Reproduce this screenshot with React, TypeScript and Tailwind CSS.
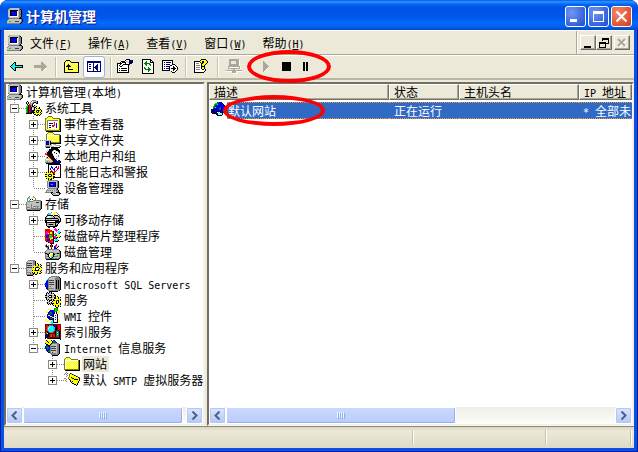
import type { ReactNode } from "react";

const palette: Record<string, string> = {
  K: "#000000", W: "#ffffff", G: "#808080", L: "#c0c0c0", D: "#404040",
  B: "#0000ff", N: "#000080", Y: "#ffff00", y: "#ffff9c", O: "#808000",
  R: "#ff0000", r: "#800000", g: "#008000", l: "#00e000", C: "#00ffff",
  t: "#008080", M: "#ff00ff", m: "#800080", S: "#aca899", s: "#6699ff"
};

const icons: Record<string, string[]> = {
  computer: [
    "..GLLLLLLLLLG...",
    ".GLLLLLLLLLLGK..",
    ".LLKKKKKKKKLGGK.",
    ".LLKNNNNNNWLGGK.",
    ".LLKNBBBBNWLGGK.",
    ".LLKNBBBBNWLGGK.",
    ".LLKNBBBBNWLGGK.",
    ".LLKNNNNNNWLGGK.",
    ".LLWWWWWWWWLGGK.",
    ".GLLLLLLLLLLGK..",
    "..GGGGGGGGGGKKK.",
    ".GLLLLLLLLLLLLGK",
    "GLLLLLLLLLLLLLGK",
    "LLllLLLLDDDDLLGK",
    "LLLLLLLLLLLLLGK.",
    "GGGGGGGGGGGGGK.."
  ],
  tools: [
    "......GGGG......",
    ".K...GWLLLGK....",
    "KWK.GWLGKKLK....",
    "KLK.GLGK..KK....",
    ".K.RGLK.........",
    ".lKRRGK.KL......",
    "llKRrGKKLLK.....",
    "lgKRrKLLKK.Y.K..",
    "lgKRrKWLK.KYOK..",
    "lgKRrBWLKYYYYYK.",
    "lgKRrBNKKYOKKOYK",
    "lgKRrBNKYYK.KYYK",
    "lgKRrKNKKYOKOYK.",
    "KKKKKK.KYYYYYYYK",
    "........KKYOKYK.",
    "..........KK.K.."
  ],
  events: [
    "...OOOO.........",
    "..OYyYyO........",
    "OOyYyYyYOOOOOOO.",
    "OYyYyYyYyYyYyYOK",
    "OyGGGGGGGGGGGyOK",
    "OYGWWWWWWWWWWYOK",
    "OyGWWWWWWRWWWyOK",
    "OYGWNNNNWRWBWYOK",
    "OyGWWWWWWRWBWyOK",
    "OYGWNNWRRRWBWYOK",
    "OyGWWWWRRWWBWyOK",
    "OYGWNNWWWWWBWYOK",
    "OyGWWWWWWWWWWyOK",
    "OYyYyYyYyYyYyYOK",
    "OOOOOOOOOOOOOOOK",
    ".KKKKKKKKKKKKKKK"
  ],
  share: [
    "...OOOOO........",
    "..OYyYyYO.......",
    ".OyYyYyYyOOOOOO.",
    ".OWWWWWWWWWWWWOK",
    ".OWYyYyYyYyYyYOK",
    ".OWyYyYyYyYyYyOK",
    ".OWYyYyYyYyYyYOK",
    ".OWyYyYyYyYyYyOK",
    "LLLLLLYyYyYyYyOK",
    "LNNNLKyYyYyYyYOK",
    "LNBBLKOOOOOOOOOK",
    "LNBBLKKKKKKKKKKK",
    "LNNNLKLWLSS.....",
    "LLLLLLLWWWLSSSS.",
    "GGGGGLLLLWWWWWLK",
    ".KKKK.KKKKKKKKK."
  ],
  users: [
    "......KKKKKKK...",
    "....KKKKKKKKKK..",
    "..LLKKKKLWLKKKK.",
    ".LWKKKKLWWWWLKK.",
    ".LNKKKKWWKWWWLK.",
    "RLNKKKKLWWWKWWG.",
    "MRKNKKKKWWWWWW..",
    ".YRKKKKKLWWWWG..",
    "..YRKKKKKWWLWG..",
    ".LKYRKKKKLWWW...",
    ".LLLYRKKKKWG....",
    "LWWWLYRKKNNLW...",
    "LLLLLLYRKNNNWBK.",
    "LLlLLLLYKNNNNNNK",
    "GGGGGGGKNNNNNNNK",
    ".KKKKKKKKKKKKKK."
  ],
  perf: [
    "...KKKKKKKKKKKKK",
    "...KWWWWWWWWWWWK",
    "...KWWBWWWWBWRWK",
    "...KWWBBWWBBWRWK",
    "...KWBWBWBWWRRWK",
    "...KWBWWBBWWRWWK",
    "...KWWRWWBWRWWWK",
    "...KYRKRWRRWWWWK",
    ".KYKYKYKRRWWWWWK",
    ".YYYYYYYKRWWWWWK",
    "KKYOKKOYKKWWWWWK",
    "YYYKWWKYYYWWWWWK",
    "KKYOKKOYKKWWWWWK",
    ".YYYYYYYKKKKKKKK",
    ".KYKYYKYK.......",
    "...KYKK........."
  ],
  device: [
    "...GGGGGGGGGG...",
    "..GLLLLLLLLLGK..",
    "..GLNNNNNNNLGK..",
    "..GLNBBBBBNLGK..",
    "..GLNBssBBNLGK..",
    "..GLNBBBBBNLGK..",
    "..GLNNNNNNNLGK..",
    "..GLLLLLLLLLGK..",
    "...GGGGGGGGGK...",
    "..GLLLLLLLLGK...",
    ".GLGLGLGLGLGGK..",
    ".GLLLLLLLLLLGK..",
    "GGGGGGKKLLLKKKK.",
    "......KLGGLWLLKK",
    ".......KLLLLLLK.",
    "........KKKKKK.."
  ],
  storage: [
    "...GWWyG........",
    "..GCWyYLG.......",
    ".GCCWYYWWG......",
    ".GWWK.KWWG......",
    ".GWlWWWGGGGGGGG.",
    ".GGGGGGLLLLLLLGK",
    "GLLLLLLLLLDDDLGK",
    "GLLLLLLLLLLLLLGK",
    "GLLLLGLLLLLLLLGK",
    "GLLLLGLLLLLLLLGK",
    "GLLLLGLGGGGGGLGK",
    "GGGGLGLLLLLlLLGK",
    "GLLLLGGGGGGGGGGK",
    "GGGGGGGGGGGGGGK.",
    ".KKKKKKKKKKKKK.."
  ],
  removable: [
    "......GWWYYG....",
    "...GCCWWYYYWG...",
    "..GCCCWWYYWWWG..",
    "..KKKKKKWKKKKWG.",
    ".KLWWWLLKLLLLKG.",
    "KLWWWLLLLKLLLLK.",
    "KKKKKKKKKKKKKLLK",
    "KLLLLLLLLLLLLKLK",
    "KKKKKKKKKKKKKKLK",
    "KKWWWWWWWWKKKKKK",
    "KKKKKKKKKKKKKKK.",
    ".KLLLLLLLLKLLK..",
    ".KLGKKKKGLKLK...",
    ".KLLLLLLLLKKK...",
    "..KKKKKKKKKK....",
    "...KK...KK......"
  ],
  defrag: [
    "..........M.....",
    "RRRRR....MMM.K..",
    "RrrRRRR...MMM...",
    "RRRRRRRRK..M.CC.",
    "RMMRRYYRK...CCCK",
    "RMMYRYYRK.l..CK.",
    "RRRRRRRRKlll....",
    "RBBBlllRK.lK.YY.",
    "RBBBlllRKMM.YYYK",
    "RBBRlllYKMMMKYK.",
    "RRRRRYYYKKMK....",
    "RRBBBYRRK.CCC...",
    "RRBBBRRRKCCCCK..",
    ".KRRRRMMK.KKK...",
    "...KRRRMK.......",
    ".....KKKK......."
  ],
  diskmgmt: [
    ".G....K....R....",
    "GK.G.KRK..RR.L..",
    "GKKG.KRK.BRLLK..",
    ".GGK..R..BBLK...",
    "..GK..K..BBK....",
    "..GGGGGGGGGGGG..",
    ".GLLLLLLLLLLLLK.",
    "GLLLLLLLLLLLLLGK",
    "GLLLGGGGGLLLLLGK",
    "KKGGKWWYKGGGKKGK",
    "GLKKWWYYKKLLLLGK",
    "GLLKWYYCKLLLlLGK",
    "GGGKWYCCKGGGGLGK",
    "GLLLKWCKLLLLLLGK",
    "GGGGGKKGGGGGGGK.",
    ".KKKKKKKKKKKKK.."
  ],
  services: [
    "..GGGGGGG.......",
    ".GLLLLLGGK......",
    "GLLLLLLGGK......",
    "GDDDDDLGGK.K....",
    "GLLLLLLGGKYYK.K.",
    "GDDDDDLGYKYYKYYK",
    "GLLLLLLYYYYOYYK.",
    "GDDDDDLKYOKKKYYK",
    "GLLLLLYYYK...KYY",
    "GLLLLLYYYK..KYYY",
    "GlLLLLKYOKKKKYYK",
    "GLLLLLYYYYYYYYK.",
    "GGGGGLKYKYYKYYYK",
    "GLLLRLGKKYYK.KK.",
    "GGGGGGGK.KK.....",
    ".KKKKKK........."
  ],
  sql: [
    "......GGGGGGGG..",
    "....GGLLLLLGGGK.",
    "...GLLLLLLGGGGGK",
    "..CGLLLLLLGGGGGK",
    ".CBGDDDDDLGKGKGK",
    ".BNGLLLLLLGKGKGK",
    "CBBGDDDDDLGKGKGK",
    "BBBGLLLLLLGKGKGK",
    "BBNGDDDDDLGKGKGK",
    "BBNGLLLLLLGKGKGK",
    "BBNGLRLLLLGKGKGK",
    ".BNGLLLLLLGKGKGK",
    ".NBGGGGGGLGKGKGK",
    "..NGLLLLLLGGGGGK",
    "...GGGGGGGGGGGK.",
    "....KKKKKKKKK..."
  ],
  gears: [
    "..K.KLK.........",
    ".KLKLLKLK.......",
    ".KWLLLLLWK......",
    "KKLLKKKLLKK.....",
    "LLLK..KLLLK.K...",
    "KKLLKKKLLKKYYK.K",
    ".KLLLLLLWKKYYKYY",
    ".KLKLLKLKYYYYYYK",
    "..K.KKK.KKYOKKYK",
    "..LLK..KYYYK.KYY",
    ".LKLLLKYYYYK.KYY",
    "..KLKLKKKYYKKYYK",
    "...K.K.KYYYYYYYK",
    "........KYKYYKYY",
    "..........KYYK.K",
    "...........KK..."
  ],
  wmi: [
    "......Y..gllg...",
    "...YYY...gllg...",
    "..Y..BBBBgllgY..",
    ".Y..BBBBBglg..Y.",
    ".YYBBggBBKWK.YY.",
    "...BgggBBKWKYY..",
    "..BBBgBBKWWWK...",
    "..BYYBBBKWBWK...",
    "..NBBYYBKWWWK...",
    "..NNBBBYYWBWK...",
    ".Y.NNggBKWWWK...",
    "Y...NNNBKWBWKY..",
    "Y..YYY.CKWWWK.Y.",
    ".YY...CCKWWWKYY.",
    ".....CCCKKKKK...",
    "......CC........"
  ],
  indexing: [
    "rrrrrrrrrrrrrrrr",
    "rRRKGGGGKBBKrRRr",
    "rRRGCCCCGBBKrRRr",
    "rRGCWCCCCGBKrRRr",
    "rRGWCCCCCGBKrRRr",
    "rRGCCCCCCGKKrRRr",
    "rRGCCCCCCGrrrrrr",
    "rrrGCCCCGrKtttKr",
    "rOKKGGGGrrKtYtKr",
    "rOYKKrrrrrKtttKr",
    "rKBKrROrRRKtYtKr",
    "KBNKrROrRRKtttKr",
    "BNKKrROrRRKtttKr",
    "NKrrrrrrrrrrrrrr",
    "K.rKKKKKKKKKKKKr",
    "...............K"
  ],
  iis: [
    ".KYYYYK.BB......",
    "YYKYYYYKggB.....",
    "YYYKYYYKgggB....",
    "KYYYYYKGGGGGGG..",
    ".KKYYKGLLLLLGGK.",
    ".BBKKGLLLLLLGGK.",
    "BggBBGDDDDDLGGK.",
    "BgggBGLLLLLLGGK.",
    "BBggBGDDDDDLGGK.",
    ".BgBBGLLLLLLGGK.",
    ".NBBgGDDDDDLGGK.",
    "..NggGLLLLLLGGK.",
    "...NNGLRLLLLGGK.",
    ".....GGGGGGLGGK.",
    "......GGGGGGGK..",
    ".......KKKKKK..."
  ],
  folder: [
    "................",
    "..OOOO..........",
    ".OyYyYO.........",
    "OYyYyYyOOOOOOO..",
    "OWWWWWWWWWWWWyOK",
    "OWYyYyYyYyYyYyOK",
    "OWyYyYyYyYyYyYOK",
    "OWYyYyYyYyYyYyOK",
    "OWyYyYyYyYyYyYOK",
    "OWYyYyYyYyYyYyOK",
    "OWyYyYyYyYyYyYOK",
    "OWYyYyYyYyYyYyOK",
    "OWyYyYyYyYyYyYOK",
    "OOOOOOOOOOOOOOOK",
    ".KKKKKKKKKKKKKKK"
  ],
  mail: [
    "..G.............",
    ".G.G..KO........",
    "G.G..OYYKO......",
    "...G.OyYYYKO....",
    "..G..OyYYYYYKO..",
    "....OYYKYYYYYYKO",
    "GG..OYYYKKYYYYYK",
    "..G..KYYYYKKKKYK",
    ".G....KYYYYYYYYK",
    "..G...KYKYYYYYK.",
    ".......KYYYYYYK.",
    "........KKYYYK..",
    "..........KKYK..",
    "............K..."
  ],
  site: [
    "......ggBBK.....",
    "....llgBBBBK....",
    "...lggCBBNBBK...",
    "...ggBBBNBBBBK..",
    "..lgBBBNBBBBBK..",
    "..ggCBNBBgBBBK..",
    "..gBBNBBggBBBK..",
    "NNKBKBBBggNBBK..",
    "BKNKBNBBBNNBBK..",
    "NNKNBKNNNNBBBK..",
    "KBNKNNWCWKBBK...",
    ".KKKKBKWCWCK....",
    ".....KKCWCWK....",
    "......KKKKK....."
  ],
  back: [
    "................",
    "................",
    "................",
    "....KK..........",
    "...KCK..........",
    "..KCCK..........",
    ".KCCCKKKKKKKK...",
    "KCCCCCCCCCCCK...",
    ".KCCCKKKKKKKK...",
    "..KCCK..........",
    "...KCK..........",
    "....KK.........."
  ],
  forward: [
    "................",
    "................",
    "................",
    ".......SS.......",
    ".......SSS......",
    ".......SSSS.....",
    "SSSSSSSSSSSS....",
    "SSSSSSSSSSSSS...",
    "SSSSSSSSSSSS....",
    ".......SSSSW....",
    ".......SSSW.....",
    ".......SSW......"
  ],
  up: [
    "................",
    "..KKKK..........",
    ".KyYyYK.........",
    "KYyYyYyKKKKKKKK.",
    "KyYyYyYyYyYyYyK.",
    "KyYyKyYyYyYyYyK.",
    "KyYKKKyYyYyYyYK.",
    "KyKKKKKyYyYyYyK.",
    "KyYyKYyYyYyYyYK.",
    "KYyYKyYyYyYyYyK.",
    "KyYyKKKKKyYyYyK.",
    "KYyYyYyYyYyYyYK.",
    "KyYyYyYyYyYyYyK.",
    "KKKKKKKKKKKKKKK."
  ],
  tree: [
    "................",
    "................",
    ".NNNNNNNNNNNNNN.",
    ".NNNNNNNNNNNNNN.",
    ".NWWWWWNWWWWWWN.",
    ".NWNNWWNWWWNWWN.",
    ".NWWWWWNWWNNWWN.",
    ".NWNNWWNWNNNWWN.",
    ".NWWWWWNNNNNWWN.",
    ".NWNNWWNWNNNWWN.",
    ".NWWWWWNWWNNWWN.",
    ".NWWWWWNWWWNWWN.",
    ".NNNNNNNNNNNNNN."
  ],
  properties: [
    ".........KKKK...",
    "........KWWWKNNN",
    "....KKKKWLLWKNNN",
    "...K.KKKKWWLKNNN",
    "KKKKKWWWKWWWKNN.",
    "KWWKWWKKKKKKK...",
    "KWKWWKWWWWWK....",
    "KWWKKWWWWWWK....",
    "KWWWWWWWWWWK....",
    "KWKWKKKKKKWK....",
    "KWWWWWWWWWWK....",
    "KWKWKKKKKKWK....",
    "KWWWWWWWWWWK....",
    "KKKKKKKKKKKK...."
  ],
  refresh: [
    ".KKKKKKKKK......",
    ".KWWWWWWWKK.....",
    ".KWWWgWWWKWK....",
    ".KWWggWWWKKKK...",
    ".KWggggggWWWK...",
    ".KWWggWWggWWK...",
    ".KWWWgWWWgWWK...",
    ".KWWWWWWWWWWK...",
    ".KWgWWWgWWWWK...",
    ".KWggWWggWWWK...",
    ".KWWggggggWWK...",
    ".KWWWWWggWWWK...",
    ".KWWWWWgWWWWK...",
    ".KWWWWWWWWWWK...",
    ".KKKKKKKKKKKK..."
  ],
  exportList: [
    "................",
    "KKKKKKKKKKK.....",
    "KWWWWWWWWWK.....",
    "KWNWNNNNNWK.....",
    "KWWWWWWWWWK.....",
    "KWNWNNNNWWKKK...",
    "KWWWWWWWKKWWWK..",
    "KWNWNNNKWWWKWWK.",
    "KWWWWWWKWWWKKWWK",
    "KWNWNNNKWKKKKKWK",
    "KWWWWWWKWWWKKWWK",
    "KKKKKKKKWWWKWWK.",
    ".........KWWWK..",
    "..........KKK..."
  ],
  help: [
    ".......KKKKK....",
    "......KYYYYYK...",
    "KKKKKKYYKKYYYK..",
    "KWWWWWKYKKYYYK..",
    "KWGGGWWKKYYYK...",
    "KWWWWWWKYYYK....",
    "KWGGGGWKYYK.....",
    "KWWWWWWKKKK.....",
    "KWGGGGWKYYK.....",
    "KWWWWWWKYYK.....",
    "KWGGGGWWKKWK....",
    "KWWWWWWWWWWK....",
    "KWWWWWWWWWK.....",
    "KKKKKKKKKK......"
  ],
  remote: [
    "...SSSSSSSSSS...",
    "...SSSSSSSSSSW..",
    "...SS.....SSSW..",
    "...SS.....SSSW..",
    "...SS.....SSSW..",
    "...SSSSSSSSSSW..",
    "...SSSSSSSSSSW..",
    "..SSSSSSSSSSSS..",
    "..SWWWWWWWWWWSW.",
    "..SSSSSSSSSSSSW.",
    ".......SSW......",
    "SSSSSSSSSSSSSSSS",
    "WWWWWWSSSSWWWWWW",
    "......SSSSW.....",
    ".......WWWW....."
  ],
  play: [
    "................",
    "................",
    "...S............",
    "...SS...........",
    "...SSS..........",
    "...SSSS.........",
    "...SSSSS........",
    "...SSSSSS.......",
    "...SSSSSW.......",
    "...SSSSW........",
    "...SSSW.........",
    "...SSW..........",
    "...SW..........."
  ],
  stop: [
    "................",
    "................",
    "................",
    "...KKKKKKKKK....",
    "...KKKKKKKKK....",
    "...KKKKKKKKK....",
    "...KKKKKKKKK....",
    "...KKKKKKKKK....",
    "...KKKKKKKKK....",
    "...KKKKKKKKK....",
    "...KKKKKKKKK....",
    "...KKKKKKKKK...."
  ],
  pause: [
    "................",
    "................",
    "................",
    ".....KK.KK......",
    ".....KK.KK......",
    ".....KK.KK......",
    ".....KK.KK......",
    ".....KK.KK......",
    ".....KK.KK......",
    ".....KK.KK......",
    ".....KK.KK......",
    ".....KK.KK......"
  ]
};

const Icon = ({ name }: { name: string }) => (
  <svg className="size-4 shrink-0" viewBox="0 0 16 16" shapeRendering="crispEdges" aria-hidden="true">
    {icons[name].map((row, y) =>
      row.split("").map((c, x) => c !== "." && <rect key={`${x}-${y}`} x={x} y={y} width="1" height="1" fill={palette[c]} />)
    )}
  </svg>
);

// Latin characters take half the width of a Chinese one
const latin = "font-['DejaVu_Sans_Mono',monospace] text-[10px] leading-none";

const Text = ({ children }: { children: string }) => (
  <>
    {children.split(/([\x20-\x7e]+)/).map((part, i) =>
      i % 2 ? <span key={i} className={latin}>{part}</span> : part
    )}
  </>
);

type TreeNode = {
  label: string;
  icon: string;
  closed?: boolean;
  selected?: boolean;
  children?: TreeNode[];
};

const tree: TreeNode = {
  label: "计算机管理(本地)",
  icon: "computer",
  children: [
    {
      label: "系统工具",
      icon: "tools",
      children: [
        { label: "事件查看器", icon: "events", closed: true },
        { label: "共享文件夹", icon: "share", closed: true },
        { label: "本地用户和组", icon: "users", closed: true },
        { label: "性能日志和警报", icon: "perf", closed: true },
        { label: "设备管理器", icon: "device" }
      ]
    },
    {
      label: "存储",
      icon: "storage",
      children: [
        { label: "可移动存储", icon: "removable", closed: true },
        { label: "磁盘碎片整理程序", icon: "defrag" },
        { label: "磁盘管理", icon: "diskmgmt" }
      ]
    },
    {
      label: "服务和应用程序",
      icon: "services",
      children: [
        { label: "Microsoft SQL Servers", icon: "sql", closed: true },
        { label: "服务", icon: "gears" },
        { label: "WMI 控件", icon: "wmi" },
        { label: "索引服务", icon: "indexing", closed: true },
        {
          label: "Internet 信息服务",
          icon: "iis",
          children: [
            { label: "网站", icon: "folder", closed: true, selected: true },
            { label: "默认 SMTP 虚拟服务器", icon: "mail", closed: true }
          ]
        }
      ]
    }
  ]
};

const TreeItem = ({ node, guides, last }: { node: TreeNode; guides: boolean[]; last: boolean }) => {
  const root = guides.length === 0;
  const expandable = node.closed || node.children;
  return (
    <li>
      <div className="flex h-4 items-center whitespace-nowrap">
        {guides.slice(1).map((on, i) => (
          <svg key={i} className="h-4 w-[19px] shrink-0" aria-hidden="true">
            {on && <path d="M7.5 0V16" stroke="#8c8a7c" strokeDasharray="1 1" />}
          </svg>
        ))}
        {!root && (
          <div className="relative h-4 w-[19px] shrink-0">
            <svg className="h-4 w-[19px]" aria-hidden="true">
              <path d={last ? "M7.5 0V8M8 8.5H19" : "M7.5 0V16M8 8.5H19"} fill="none" stroke="#8c8a7c" strokeDasharray="1 1" />
            </svg>
            {expandable && (
              <button aria-label={node.closed ? "展开" : "折叠"} className="absolute top-1 left-[3px] size-[9px] border border-[#8c8a7c] bg-white">
                <svg className="size-[7px]" viewBox="0 0 7 7" shapeRendering="crispEdges">
                  <path d={node.closed ? "M1 3h5v1H1zM3 1h1v5H3z" : "M1 3h5v1H1z"} />
                </svg>
              </button>
            )}
          </div>
        )}
        <Icon name={node.icon} />
        <span className={node.selected ? "ml-0.5 h-4 bg-[#ece9d8] pr-0.5 pl-px" : "ml-0.5 h-4 pl-px"}>
          <Text>{node.label}</Text>
        </span>
      </div>
      {node.children && (
        <ul>
          {node.children.map((child, i) => (
            <TreeItem key={child.label} node={child} guides={[...guides, !last]} last={i === node.children!.length - 1} />
          ))}
        </ul>
      )}
    </li>
  );
};

const menus = [
  ["文件", "F"],
  ["操作", "A"],
  ["查看", "V"],
  ["窗口", "W"],
  ["帮助", "H"]
];

const Arrow = ({ right = false }: { right?: boolean }) => (
  <button
    aria-label={right ? "向右滚动" : "向左滚动"}
    className="flex size-[17px] shrink-0 items-center justify-center rounded-xs border border-white bg-linear-to-b from-[#dbe5ff] to-[#b4c8f6] shadow-[inset_0_0_0_1px_#b4c8f6]"
  >
    <svg className="size-[9px]" viewBox="0 0 9 9" fill="none" stroke="#4d6185" strokeWidth="2">
      <path d={right ? "M2.5 0.5L6.5 4.5L2.5 8.5" : "M6.5 0.5L2.5 4.5L6.5 8.5"} />
    </svg>
  </button>
);

const ScrollBar = ({ children }: { children: ReactNode }) => (
  <div className="flex h-[17px] shrink-0 bg-linear-to-b from-[#eeede5] to-[#fefefb]">
    <Arrow />
    <div className="flex min-w-0 flex-1">{children}</div>
    <Arrow right />
  </div>
);

const Grip = () => (
  <svg className="h-[7px] w-2" viewBox="0 0 8 7" shapeRendering="crispEdges" aria-hidden="true">
    <path d="M0 0h1v6H0zM2 0h1v6H2zM4 0h1v6H4zM6 0h1v6H6z" fill="#eef4fe" />
    <path d="M1 1h1v6H1zM3 1h1v6H3zM5 1h1v6H5zM7 1h1v6H7z" fill="#8cb0f8" />
  </svg>
);

const ToolButton = ({ icon, label }: { icon: string; label: string }) => (
  <button aria-label={label} className="flex h-5 items-center">
    <Icon name={icon} />
  </button>
);

const Separator = () => <div className="h-5 w-0.5 shrink-0 border-l border-[#c5c2b2] border-r border-r-white" />;

const captionButton = "flex size-[21px] items-center justify-center rounded-[3px] border border-white";
const mdiButton = "flex h-[15px] w-4 items-center justify-center border border-white border-r-[#716f64] border-b-[#716f64] bg-[#ece9d8] shadow-[inset_-1px_-1px_#aca899]";
const thumb = "flex items-center justify-center rounded-xs border border-white bg-linear-to-b from-[#cad8fd] to-[#b9cdfb] shadow-[inset_0_-1px_#98b0e8,inset_-1px_0_#98b0e8]";
const sunken = "flex flex-col overflow-hidden border-2 border-[#716f64] border-r-[#f5f3e8] border-b-[#f5f3e8] bg-white";
const headCell = "h-4 overflow-hidden border border-white border-r-[#716f64] border-b-[#716f64] bg-[#ece9d8] p-0 pl-1 text-left font-normal shadow-[inset_-1px_-1px_#aca899]";
const rowCell = "overflow-hidden p-0 pt-0.5 align-top";
const rowFill = "h-[17px] border-y border-dotted border-[#e69a2e] bg-[#316ac5] leading-[15px] text-white";

export default function App() {
  return (
    <div className="relative flex h-screen flex-col overflow-hidden rounded-t-lg bg-[#001ea0] font-['Noto_Sans_CJK_SC',sans-serif] text-xs leading-4 text-black">
      <header className="flex h-[30px] shrink-0 items-center gap-[3px] bg-[linear-gradient(#0058ee_0%,#3593ff_6%,#127dff_10%,#0262ee_16%,#0054e3_26%,#0055eb_56%,#026afe_78%,#0062ef_88%,#0048c8_100%)] pt-0.5 pr-1.5 pl-[7px]">
        <Icon name="computer" />
        <h1 className="flex-1 text-sm leading-5 font-bold text-white [text-shadow:1px_1px_#0f1089]">计算机管理</h1>
        <div className="flex gap-0.5">
          <button aria-label="最小化" className={`${captionButton} bg-radial-[at_30%_30%] from-[#6f97f5] to-[#1c4bd1]`}>
            <svg className="size-[15px]" viewBox="0 0 15 15"><path d="M2 10h7v3H2z" fill="white" /></svg>
          </button>
          <button aria-label="最大化" className={`${captionButton} bg-radial-[at_30%_30%] from-[#6f97f5] to-[#1c4bd1]`}>
            <svg className="size-[15px]" viewBox="0 0 15 15"><path d="M2 2h11v11H2zM3 5v7h9V5z" fill="white" fillRule="evenodd" /></svg>
          </button>
          <button aria-label="关闭" className={`${captionButton} bg-radial-[at_30%_30%] from-[#f08a68] to-[#d8381a]`}>
            <svg className="size-[15px]" viewBox="0 0 15 15" stroke="white" strokeWidth="2.2"><path d="M2.5 2.5L12.5 12.5M12.5 2.5L2.5 12.5" /></svg>
          </button>
        </div>
      </header>

      <main className="mx-px mb-px flex min-h-0 flex-1 flex-col border-x-3 border-b-3 border-[#0a50e6] bg-[#ece9d8]">
        <div className="flex h-[25px] shrink-0 border-t border-b border-white border-b-[#aca899] pl-[3px]">
          <div className="flex flex-1 items-center gap-[7px]">
            <Icon name="computer" />
            <nav className="flex gap-4 pt-px">
              {menus.map(([name, key]) => (
                <button key={key} className="whitespace-nowrap">
                  {name}
                  <span className={latin}>(<u>{key}</u>)</span>
                </button>
              ))}
            </nav>
          </div>
          <div className="flex items-center border-l border-[#aca899] pr-1 pl-[3px] shadow-[inset_1px_0_white]">
            <button aria-label="最小化窗口" className={mdiButton}>
              <svg className="size-3" viewBox="0 0 12 12"><path d="M2 9h7v2H2z" /></svg>
            </button>
            <button aria-label="还原窗口" className={mdiButton}>
              <svg className="size-3" viewBox="0 0 12 12" shapeRendering="crispEdges">
                <path d="M4 1h7v6H8V6h2V3H5v1H4zM1 5h7v6H1zM2 7v3h5V7z" fillRule="evenodd" />
              </svg>
            </button>
            <button aria-label="关闭窗口" disabled className={`${mdiButton} ml-0.5`}>
              <svg className="size-3" viewBox="0 0 12 12" strokeWidth="2">
                <path d="M3 3L10 10M10 3L3 10" stroke="white" />
                <path d="M2 2L9 9M9 2L2 9" stroke="#aca899" />
              </svg>
            </button>
          </div>
        </div>

        <div className="mb-0.5 flex h-[25px] shrink-0 items-center border-t border-b-2 border-white border-b-[#b9b6a6] pl-1.5">
          <div className="flex items-center gap-2">
            <ToolButton icon="back" label="后退" />
            <ToolButton icon="forward" label="前进" />
          </div>
          <div className="ml-[5px] flex items-center gap-[7px]">
            <Separator />
            <ToolButton icon="up" label="上一级" />
          </div>
          <button aria-label="显示/隐藏控制台树" className="ml-[3px] flex size-[22px] items-center justify-center rounded-[3px] border border-[#98b5e2] bg-white">
            <Icon name="tree" />
          </button>
          <div className="ml-[5px] flex items-center gap-[5px]">
            <Separator />
            <ToolButton icon="properties" label="属性" />
          </div>
          <div className="ml-2 flex items-center gap-[5px]">
            <ToolButton icon="refresh" label="刷新" />
            <ToolButton icon="exportList" label="导出列表" />
          </div>
          <div className="ml-[7px] flex items-center gap-[7px]">
            <Separator />
            <ToolButton icon="help" label="帮助" />
            <Separator />
            <ToolButton icon="remote" label="连接" />
          </div>
          <div className="ml-[18px] flex items-center gap-[3px]">
            <ToolButton icon="play" label="启动" />
            <ToolButton icon="stop" label="停止" />
            <ToolButton icon="pause" label="暂停" />
          </div>
        </div>

        <div className="flex min-h-0 flex-1 gap-0.5">
          <aside className={`${sunken} w-[201px] shrink-0`}>
            <ul className="min-h-0 flex-1 overflow-hidden pl-px">
              <TreeItem node={tree} guides={[]} last={false} />
            </ul>
            <ScrollBar>
              <div className={`${thumb} w-[98%]`}><Grip /></div>
            </ScrollBar>
          </aside>

          <section className={`${sunken} min-w-0 flex-1`}>
            <div className="min-h-0 flex-1 overflow-hidden">
              <table className="w-full table-fixed border-separate border-spacing-0 whitespace-nowrap">
                <colgroup>
                  <col className="w-[180px]" />
                  <col className="w-[70px]" />
                  <col className="w-[120px]" />
                  <col />
                </colgroup>
                <thead className="leading-[14px]">
                  <tr>
                    <th className={headCell}>描述</th>
                    <th className={headCell}>状态</th>
                    <th className={headCell}>主机头名</th>
                    <th className={headCell}><Text>IP 地址</Text></th>
                  </tr>
                </thead>
                <tbody>
                  <tr>
                    <td className={rowCell}>
                      <div className="flex pl-0.5">
                        <Icon name="site" />
                        <div className={`${rowFill} flex-1 pl-px`}>默认网站</div>
                      </div>
                    </td>
                    <td className={rowCell}><div className={`${rowFill} pl-[5px]`}>正在运行</div></td>
                    <td className={rowCell}><div className={rowFill} /></td>
                    <td className={rowCell}><div className={`${rowFill} pl-1`}><Text>* 全部未</Text></div></td>
                  </tr>
                </tbody>
              </table>
            </div>
            <ScrollBar>
              <div className={`${thumb} w-[59%]`}><Grip /></div>
            </ScrollBar>
          </section>
        </div>

        <footer className="flex h-[22px] shrink-0 border-t border-[#8d8b80] bg-linear-to-b from-[#d8d4c2] via-[#ece9d8] via-20% to-[#dedac6] py-[3px] pr-0.5">
          <div className="flex-1 border-r border-white shadow-[inset_-1px_0_#c5c2b2]" />
          <div className="w-[133px] border-r border-white shadow-[inset_-1px_0_#c5c2b2]" />
          <div className="w-[85px] border-r border-white shadow-[inset_-1px_0_#c5c2b2]" />
        </footer>
      </main>

      {/* hand-drawn marks over the service buttons and the site name */}
      <div className="pointer-events-none absolute top-[50px] left-[247px] h-[33px] w-[84px] rounded-[50%] border-4 border-[#ff0000]" />
      <div className="pointer-events-none absolute top-[95px] left-[223px] h-[31px] w-[102px] rounded-[50%] border-4 border-[#ff0000]" />
    </div>
  );
}
